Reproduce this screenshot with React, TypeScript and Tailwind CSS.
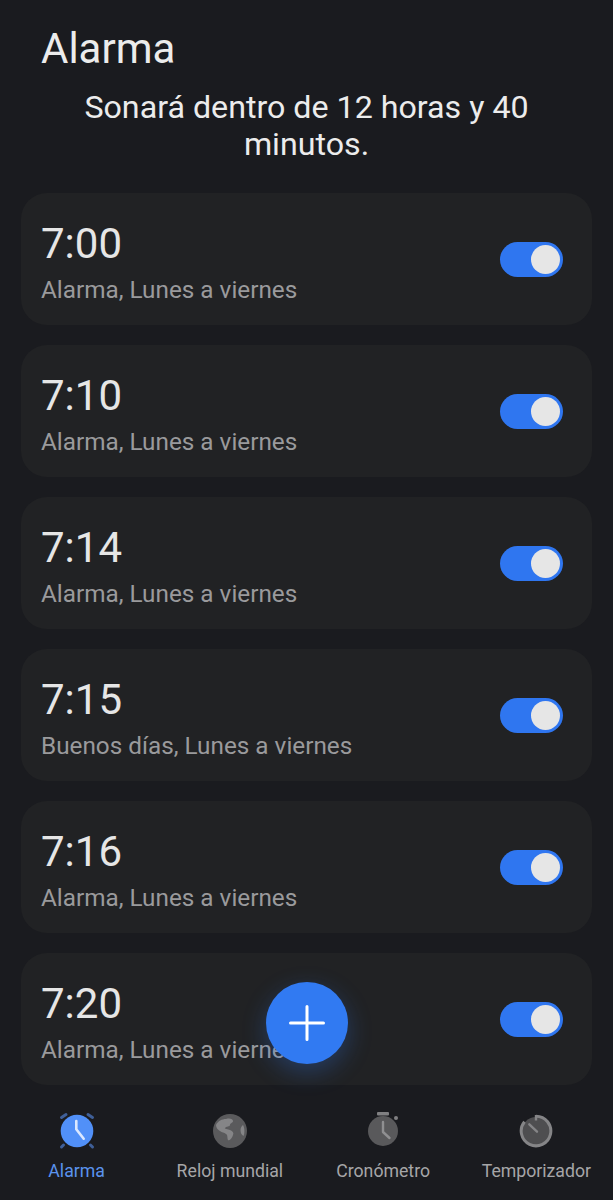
const alarms = [
  { time: "7:00", label: "Alarma, Lunes a viernes" },
  { time: "7:10", label: "Alarma, Lunes a viernes" },
  { time: "7:14", label: "Alarma, Lunes a viernes" },
  { time: "7:15", label: "Buenos días, Lunes a viernes" },
  { time: "7:16", label: "Alarma, Lunes a viernes" },
  { time: "7:20", label: "Alarma, Lunes a viernes" },
];

function Toggle() {
  return (
    <div className="flex h-[35px] w-[63px] items-center justify-end rounded-full bg-[#2f76f0] pr-[3px]">
      <div className="h-[29px] w-[29px] rounded-full bg-[#e6e6e6]" />
    </div>
  );
}

function AlarmIcon() {
  return (
    <svg width="38" height="38" viewBox="0 0 38 38" fill="none">
      <path d="M3.5 5.5 8 2.5M34.5 5.5 30 2.5M5.5 33 3.5 35M32.5 33 34.5 35" stroke="#3f5f98" strokeWidth="3" strokeLinecap="round" />
      <circle cx="19" cy="19" r="16.3" fill="#5190f8" />
      <path d="M18.3 9V17.3L25.7 26.7" stroke="#dbe8ff" strokeWidth="2.6" strokeLinecap="round" strokeLinejoin="round" />
    </svg>
  );
}

function GlobeIcon() {
  return (
    <svg width="36" height="36" viewBox="0 0 36 36" fill="none">
      <circle cx="18" cy="18" r="17" fill="#5a5a5c" />
      <path d="M4 12c2-4 6-6 10-6 4-1 7 0 7 2 0 2-3 2-3 4 0 2-4 1-5 3-1 1 3 1 5 2 3 1 4 3 3 5-1 3-3 6-5 5-1-2 0-5-2-6-2-2-4-1-6-3-2-1-4-3-4-6Z" fill="#858587" />
      <path d="M31 12c1.500 2 2 8 .500 11-2-1-3-3-3-6 0-2 1-4 2.500-5Z" fill="#858587" />
    </svg>
  );
}

function StopwatchIcon() {
  return (
    <svg width="36" height="38" viewBox="0 0 36 38" fill="none">
      <rect x="12" y="0" width="12" height="3.400" rx="1" fill="#808082" />
      <circle cx="31" cy="6" r="2" fill="#808082" />
      <circle cx="18" cy="19" r="15" fill="#59595b" />
      <path d="M18 10V20L24.500 26" stroke="#8f8f91" strokeWidth="2.400" strokeLinecap="round" strokeLinejoin="round" />
    </svg>
  );
}

function TimerIcon() {
  return (
    <svg width="36" height="36" viewBox="0 0 36 36" fill="none">
      <circle cx="18" cy="18" r="14" fill="#4e4e50" />
      <path d="M18 3.200A14.800 14.800 0 1 1 6.500 8.700" stroke="#858587" strokeWidth="3" strokeLinecap="butt" />
      <path d="M18 2V7.500" stroke="#858587" strokeWidth="2.400" />
      <path d="M11.300 11.300 19 18.700" stroke="#858587" strokeWidth="2.400" strokeLinecap="round" />
    </svg>
  );
}

const tabs = [
  { name: "Alarma", icon: <AlarmIcon />, color: "text-[#5b93ee]" },
  { name: "Reloj mundial", icon: <GlobeIcon />, color: "text-[#a6a6a8]" },
  { name: "Cronómetro", icon: <StopwatchIcon />, color: "text-[#a6a6a8]" },
  { name: "Temporizador", icon: <TimerIcon />, color: "text-[#a6a6a8]" },
];

export default function App() {
  return (
    <div className="relative flex h-[1200px] w-[613px] flex-col overflow-hidden bg-[#1a1b1f] font-['Roboto','Noto_Sans',sans-serif]">
      <h1 className="pl-[41px] pt-[26px] text-[42px] font-normal leading-[46px] text-[#ececec]">Alarma</h1>
      <p className="px-[60px] pt-[17px] text-center text-[32.2px] leading-[37px] text-[#ececec]">
        Sonará dentro de 12 horas y 40 minutos.
      </p>
      <div className="flex flex-col gap-[20px] px-[21px] pt-[30px]">
        {alarms.map((a) => (
          <div key={a.time} className="flex h-[132px] items-center justify-between rounded-[26px] bg-[#212224] pl-[20px] pr-[29px]">
            <div className="pt-[6px]">
              <div className="text-[42px] leading-[50px] text-[#e6e6e6]">{a.time}</div>
              <div className="pt-[6px] text-[24.3px] leading-[30px] text-[#9a9a9c]">{a.label}</div>
            </div>
            <Toggle />
          </div>
        ))}
      </div>
      <div className="absolute left-[266px] top-[982px] flex h-[82px] w-[82px] items-center justify-center rounded-full bg-[#317af2] shadow-[0_8px_24px_rgba(49,122,242,0.3)]">
        <svg width="36" height="36" viewBox="0 0 36 36" fill="none">
          <path d="M18 1.500V34.500M1.500 18H34.500" stroke="#ffffff" strokeWidth="3" strokeLinecap="round" />
        </svg>
      </div>
      <div className="grid grid-cols-4 pt-[27px]">
        {tabs.map((t) => (
          <div key={t.name} className="flex flex-col items-center">
            <div className="flex h-[38px] items-center justify-center">{t.icon}</div>
            <div className={`whitespace-nowrap pt-[9px] text-[17.7px] leading-[24px] ${t.color}`}>{t.name}</div>
          </div>
        ))}
      </div>
    </div>
  );
}
